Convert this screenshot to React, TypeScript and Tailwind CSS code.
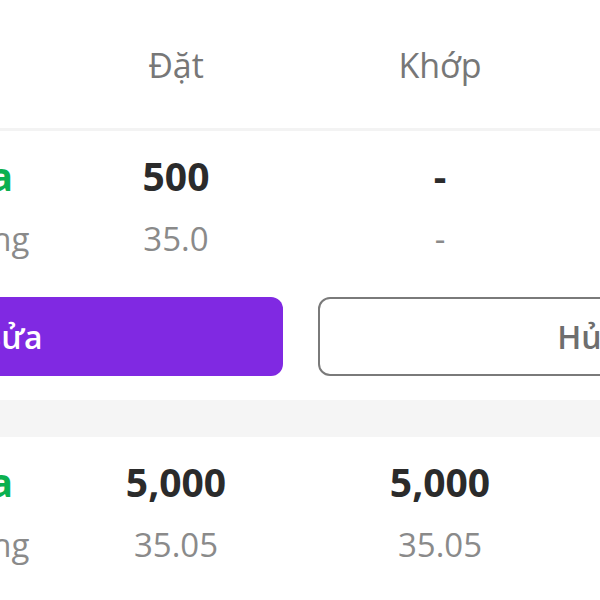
import React from "react";

const font = { fontFamily: '"Open Sans", "Noto Sans", sans-serif' };

function Row({
  side,
  sideSub,
  placed,
  placedSub,
  matched,
  matchedSub,
}: {
  side: string;
  sideSub: string;
  placed: string;
  placedSub: string;
  matched: string;
  matchedSub: string;
}) {
  return (
    <div className="grid grid-cols-[148px_264px_264px_264px] pl-[186px] pt-[21px]">
      <div className="flex flex-col items-center">
        <div className="text-[39px] leading-[48px] font-bold text-[#0bb04f]">{side}</div>
        <div className="mt-[19px] text-[33px] leading-[40px] text-[#8a8a8a]">{sideSub}</div>
      </div>
      <div className="flex flex-col items-center">
        <div className="text-[39px] leading-[48px] font-bold text-[#2b2b2b]">{placed}</div>
        <div className="mt-[19px] text-[33px] leading-[40px] text-[#8a8a8a]">{placedSub}</div>
      </div>
      <div className="flex flex-col items-center">
        <div className="text-[39px] leading-[48px] font-bold text-[#2b2b2b]">{matched}</div>
        <div className="mt-[19px] text-[33px] leading-[40px] text-[#8a8a8a]">{matchedSub}</div>
      </div>
      <div />
    </div>
  );
}

export default function App() {
  return (
    <div className="w-[600px] h-[600px] overflow-hidden bg-white" style={font}>
      <div className="ml-[-290px] w-[1180px]">
        {/* Header */}
        <div className="grid grid-cols-[148px_264px_264px_264px] pl-[186px] h-[131px] items-center border-b-[3px] border-[#f3f3f3] text-[34px] leading-[51px] text-[#777777]">
          <div />
          <div className="text-center pt-[3px]">Đặt</div>
          <div className="text-center pt-[3px]">Khớp</div>
          <div />
        </div>

        {/* Row 1 */}
        <Row side="Mua" sideSub="Thường" placed="500" placedSub="35.0" matched="-" matchedSub="-" />

        {/* Buttons */}
        <div className="flex gap-[35px] pl-[33px] mt-[38px]">
          <button className="w-[540px] h-[79px] rounded-[12px] bg-[#8029e2] text-white text-[32px] font-semibold flex items-center justify-center">
            Sửa
          </button>
          <button className="w-[540px] h-[79px] rounded-[12px] border-2 border-[#7a7a7a] bg-white text-[#6e6e6e] text-[32px] font-semibold flex items-center justify-center">
            Hủy
          </button>
        </div>

        {/* Separator band */}
        <div className="mt-[24px] h-[37px] bg-[#f5f5f5]" />

        {/* Row 2 */}
        <Row side="Mua" sideSub="Thường" placed="5,000" placedSub="35.05" matched="5,000" matchedSub="35.05" />
      </div>
    </div>
  );
}
